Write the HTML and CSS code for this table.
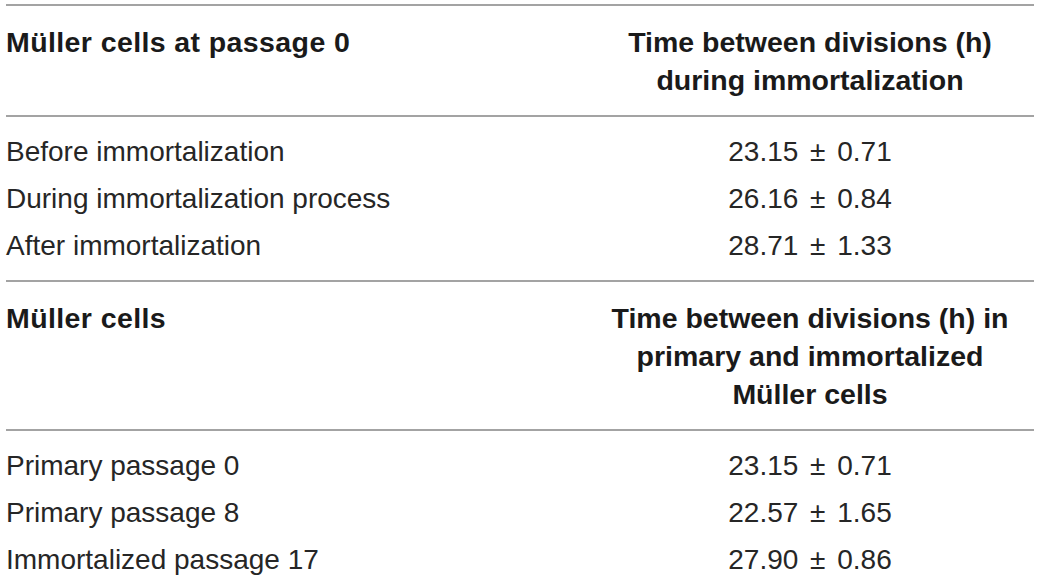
FILE: index.html
```html
<!DOCTYPE html>
<html lang="en">
<head>
<meta charset="utf-8">
<title>Müller cells division times</title>
<link rel="stylesheet" href="styles.css">
</head>
<body>
<table class="data">
  <tbody class="section">
    <tr class="head">
      <th class="label">Müller cells at passage 0</th>
      <th class="value">Time between divisions (h)<br>during immortalization</th>
    </tr>
    <tr class="row first">
      <td class="label">Before immortalization</td>
      <td class="value">23.15 <span class="pm">±</span> 0.71</td>
    </tr>
    <tr class="row">
      <td class="label">During immortalization process</td>
      <td class="value">26.16 <span class="pm">±</span> 0.84</td>
    </tr>
    <tr class="row last">
      <td class="label">After immortalization</td>
      <td class="value">28.71 <span class="pm">±</span> 1.33</td>
    </tr>
  </tbody>
  <tbody class="section">
    <tr class="head">
      <th class="label">Müller cells</th>
      <th class="value">Time between divisions (h) in<br>primary and immortalized<br>Müller cells</th>
    </tr>
    <tr class="row first">
      <td class="label">Primary passage 0</td>
      <td class="value">23.15 <span class="pm">±</span> 0.71</td>
    </tr>
    <tr class="row">
      <td class="label">Primary passage 8</td>
      <td class="value">22.57 <span class="pm">±</span> 1.65</td>
    </tr>
    <tr class="row last">
      <td class="label">Immortalized passage 17</td>
      <td class="value">27.90 <span class="pm">±</span> 0.86</td>
    </tr>
  </tbody>
</table>
</body>
</html>
```
FILE: styles.css
```css
html, body {
  margin: 0;
  padding: 0;
  background: #ffffff;
}

body {
  padding: 4px 6px 0 6px;
  font-family: "Liberation Sans", Arial, sans-serif;
  color: #262626;
}

.data {
  width: 1028px;
  border-collapse: collapse;
  table-layout: fixed;
}

.data th,
.data td {
  padding: 0;
  font-size: 28px;
}

.data th {
  font-weight: bold;
  font-size: 28.5px;
  line-height: 38px;
  color: #1a1a1a;
  vertical-align: top;
  white-space: nowrap;
}

.data th.label {
  letter-spacing: 0.4px;
}

.data .label {
  width: 580px;
  text-align: left;
}

.data .value {
  text-align: center;
}

.head th {
  border-top: 2px solid #a3a3a3;
  border-bottom: 2px solid #a3a3a3;
  padding-top: 17px;
  padding-bottom: 16px;
}

.row td {
  font-weight: normal;
  line-height: 47px;
  white-space: nowrap;
}

.pm {
  display: inline-block;
  margin: 0 4px;
}

.row.first td {
  padding-top: 11px;
}

.row.last td {
  padding-bottom: 11px;
}
```
